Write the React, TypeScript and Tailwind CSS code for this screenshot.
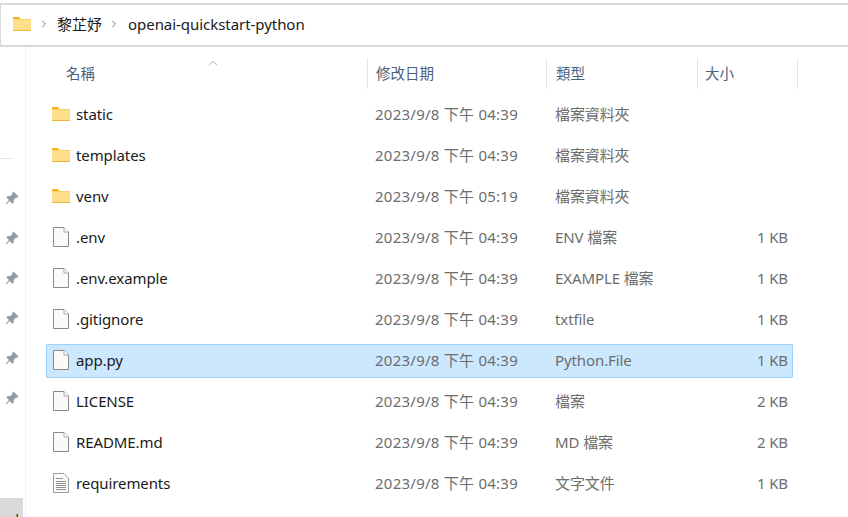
import { ChevronRight, ChevronUp } from "lucide-react";

const FONT = "font-['Noto_Sans','Noto_Sans_CJK_TC',sans-serif]";

interface Row {
  name: string;
  date: string;
  type: string;
  size?: string;
  icon: "folder" | "file" | "text";
  selected?: boolean;
}

const rows: Row[] = [
  { name: "static", date: "2023/9/8 下午 04:39", type: "檔案資料夾", icon: "folder" },
  { name: "templates", date: "2023/9/8 下午 04:39", type: "檔案資料夾", icon: "folder" },
  { name: "venv", date: "2023/9/8 下午 05:19", type: "檔案資料夾", icon: "folder" },
  { name: ".env", date: "2023/9/8 下午 04:39", type: "ENV 檔案", size: "1 KB", icon: "file" },
  { name: ".env.example", date: "2023/9/8 下午 04:39", type: "EXAMPLE 檔案", size: "1 KB", icon: "file" },
  { name: ".gitignore", date: "2023/9/8 下午 04:39", type: "txtfile", size: "1 KB", icon: "file" },
  { name: "app.py", date: "2023/9/8 下午 04:39", type: "Python.File", size: "1 KB", icon: "file", selected: true },
  { name: "LICENSE", date: "2023/9/8 下午 04:39", type: "檔案", size: "2 KB", icon: "file" },
  { name: "README.md", date: "2023/9/8 下午 04:39", type: "MD 檔案", size: "2 KB", icon: "file" },
  { name: "requirements", date: "2023/9/8 下午 04:39", type: "文字文件", size: "1 KB", icon: "text" },
];

function FolderIcon() {
  return (
    <svg width="18" height="14" viewBox="0 0 18 14" className="block">
      <path d="M0 1C0 .4.400 0 1 0h5l2 2.500H0z" fill="#f5b21f" />
      <path d="M0 2h18v11.300c0 .4-.3.7-.7.7H.7c-.4 0-.7-.3-.7-.7z" fill="#fbd066" />
      <path d="M0 3h18v10.300c0 .4-.3.7-.7.7H.7c-.4 0-.7-.3-.7-.7z" fill="#fee08a" />
      <path d="M0 13h18v.3c0 .4-.3.7-.7.7H.7c-.4 0-.7-.3-.7-.7z" fill="#eeb436" />
    </svg>
  );
}

function FileIcon() {
  return (
    <svg width="16" height="20" viewBox="0 0 16 20" className="block">
      <path d="M.5.500h10.500l4.500 4.500v14.500H.5z" fill="#fafafa" stroke="#8a8a8a" />
      <path d="M11 .5v4.500h4.500" fill="#fff" stroke="#a8a8a8" />
    </svg>
  );
}

function TextFileIcon() {
  return (
    <svg width="16" height="20" viewBox="0 0 16 20" className="block">
      <path d="M.5.500h10.500l4.500 4.500v14.500H.5z" fill="#fafafa" stroke="#9c9c9c" />
      <path d="M3 5.500h7M3 8.500h10M3 10.500h10M3 12.500h10M3 14.500h10M3 16.500h10" stroke="#8f8f8f" />
    </svg>
  );
}

function PinIcon() {
  return (
    <svg width="14" height="14" viewBox="0 0 14 14" className="block">
      <path d="M8.500.5l5 5-1.300 1.200-1-.3-2.600 2.500.2 2.500-1.300 1.300-2.600-2.800-3.500 3.300-.6-.6 3.200-3.700L1.300 6.200l1.300-1.300 2.500.3 2.500-2.500-.3-1z" fill="#8f9aa3" />
    </svg>
  );
}

function FileRow({ row }: { row: Row }) {
  return (
    <div
      className={`flex h-[34px] items-center border pb-[2px] text-[15px] leading-none rounded-[1px] ${
        row.selected ? "bg-[#cce8ff] border-[#99d1ff]" : "border-transparent"
      }`}
    >
      <div className="flex w-[328px] items-center">
        <div className="flex w-[28px] shrink-0 justify-center">
          {row.icon === "folder" && <FolderIcon />}
          {row.icon === "file" && <FileIcon />}
          {row.icon === "text" && <TextFileIcon />}
        </div>
        <span className="ml-[1px] text-[#1a1a1a] tracking-[-0.1px]">{row.name}</span>
      </div>
      <div className="w-[180px] text-[#6d6d6d] tracking-[0.25px]">{row.date}</div>
      <div className="w-[200px] text-[#6d6d6d] tracking-[-0.1px]">{row.type}</div>
      <div className="w-[33px] text-right text-[#6d6d6d] tracking-[-0.1px]">{row.size}</div>
    </div>
  );
}

function HeaderCell({ label, className }: { label: string; className: string }) {
  return (
    <div className={`flex h-[31px] items-center border-r border-[#e5e5e5] ${className}`}>
      <span className="text-[14.500px] text-[#4c607a]">{label}</span>
    </div>
  );
}

export default function App() {
  return (
    <div className={`flex h-[517px] w-[848px] flex-col overflow-hidden bg-white ${FONT}`}>
      {/* address bar */}
      <div className="mt-[3px] flex h-[44px] items-center border-y-2 border-l border-[#d9d9d9] pb-[2px] pl-[12px] text-[15px] text-[#1a1a1a]">
        <FolderIcon />
        <ChevronRight size={12} className="ml-[7px] text-[#7a7a7a]" strokeWidth={2} />
        <span className="ml-[7px]">黎芷妤</span>
        <ChevronRight size={12} className="ml-[6px] text-[#7a7a7a]" strokeWidth={2} />
        <span className="ml-[8px] tracking-[-0.05px]">openai-quickstart-python</span>
      </div>

      <div className="flex min-h-0 flex-1">
        {/* nav pane edge */}
        <div className="flex w-[26px] shrink-0 flex-col border-r border-[#f0f0f0]">
          <div className="mt-[111px] h-px w-[13px] bg-[#e3e3e3]" />
          <div className="mt-[32px] flex flex-col items-start gap-[26px] pl-[5px]">
            {[0, 1, 2, 3, 4, 5].map((i) => (
              <PinIcon key={i} />
            ))}
          </div>
          <div className="mt-auto h-[19px] w-[23px] shrink-0 overflow-hidden bg-[#d9d9d9] pl-[2px] pt-[10px] text-[13px] leading-[22px] text-[#1a1a1a]">
            url
          </div>
        </div>

        {/* file list */}
        <div className="flex-1 pl-[20px]">
          <div className="relative mt-[11px] flex h-[31px] items-center">
            <ChevronUp size={14} className="absolute left-[160px] -top-[2px] text-[#8a8a8a]" strokeWidth={1.250} />
            <div className="w-[321px] pl-[20px] text-[14.500px] text-[#4c607a]">名稱</div>
            <HeaderCell label="修改日期" className="w-[180px] border-l pl-[8px]" />
            <HeaderCell label="類型" className="w-[151px] pl-[9px]" />
            <HeaderCell label="大小" className="w-[100px] pl-[7px]" />
          </div>
          <div className="mt-[9px] flex w-[747px] flex-col gap-[7px]">
            {rows.map((row) => (
              <FileRow key={row.name} row={row} />
            ))}
          </div>
        </div>
      </div>
    </div>
  );
}
